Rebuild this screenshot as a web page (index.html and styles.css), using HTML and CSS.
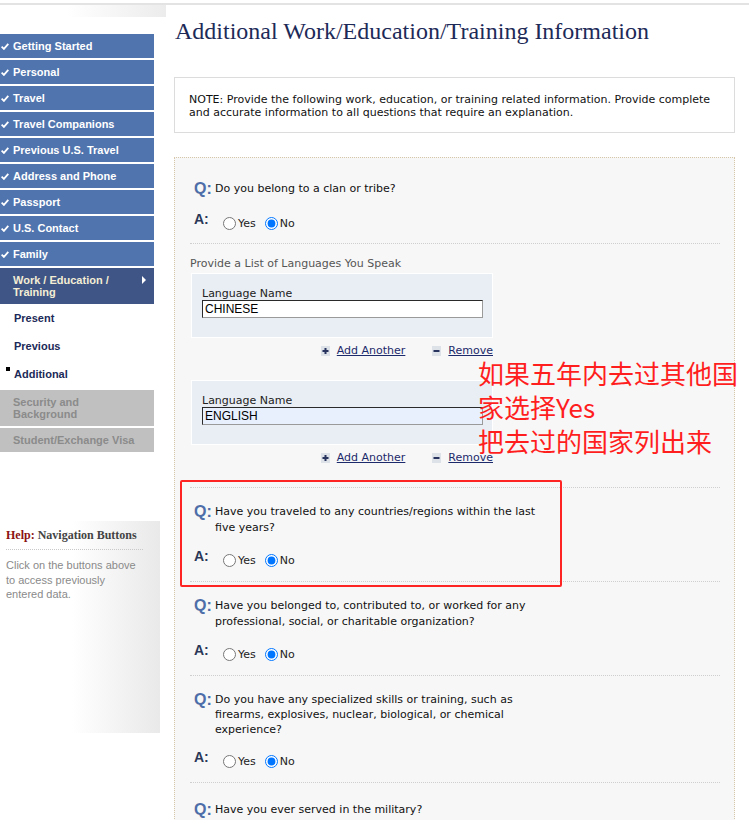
FILE: index.html
```html
<!DOCTYPE html>
<html>
<head>
<meta charset="utf-8">
<link rel="stylesheet" href="styles.css">
</head>
<body>
<div class="topline"></div>
<div class="layout">
  <aside class="sidebar">
    <div class="side-head"></div>
    <nav class="nav">
      <div class="nav-item done"><svg class="chk" viewBox="0 0 8 7"><path d="M0.6 3.6 L2.9 5.9 L7.3 0.9" fill="none" stroke="#fff" stroke-width="1.8"/></svg>Getting Started</div>
      <div class="nav-item done"><svg class="chk" viewBox="0 0 8 7"><path d="M0.6 3.6 L2.9 5.9 L7.3 0.9" fill="none" stroke="#fff" stroke-width="1.8"/></svg>Personal</div>
      <div class="nav-item done"><svg class="chk" viewBox="0 0 8 7"><path d="M0.6 3.6 L2.9 5.9 L7.3 0.9" fill="none" stroke="#fff" stroke-width="1.8"/></svg>Travel</div>
      <div class="nav-item done"><svg class="chk" viewBox="0 0 8 7"><path d="M0.6 3.6 L2.9 5.9 L7.3 0.9" fill="none" stroke="#fff" stroke-width="1.8"/></svg>Travel Companions</div>
      <div class="nav-item done"><svg class="chk" viewBox="0 0 8 7"><path d="M0.6 3.6 L2.9 5.9 L7.3 0.9" fill="none" stroke="#fff" stroke-width="1.8"/></svg>Previous U.S. Travel</div>
      <div class="nav-item done"><svg class="chk" viewBox="0 0 8 7"><path d="M0.6 3.6 L2.9 5.9 L7.3 0.9" fill="none" stroke="#fff" stroke-width="1.8"/></svg>Address and Phone</div>
      <div class="nav-item done"><svg class="chk" viewBox="0 0 8 7"><path d="M0.6 3.6 L2.9 5.9 L7.3 0.9" fill="none" stroke="#fff" stroke-width="1.8"/></svg>Passport</div>
      <div class="nav-item done"><svg class="chk" viewBox="0 0 8 7"><path d="M0.6 3.6 L2.9 5.9 L7.3 0.9" fill="none" stroke="#fff" stroke-width="1.8"/></svg>U.S. Contact</div>
      <div class="nav-item done"><svg class="chk" viewBox="0 0 8 7"><path d="M0.6 3.6 L2.9 5.9 L7.3 0.9" fill="none" stroke="#fff" stroke-width="1.8"/></svg>Family</div>
      <div class="nav-item current"><span>Work / Education /<br>Training</span><span class="tri"></span></div>
      <div class="sub">Present</div>
      <div class="sub">Previous</div>
      <div class="sub active"><span class="bullet"></span>Additional</div>
      <div class="nav-item disabled sec">Security and<br>Background</div>
      <div class="nav-item disabled">Student/Exchange Visa</div>
    </nav>
    <div class="help">
      <div class="help-title"><span class="help-key">Help:</span> Navigation Buttons</div>
      <div class="help-rule"></div>
      <div class="help-text">Click on the buttons above<br>to access previously<br>entered data.</div>
    </div>
  </aside>

  <main class="main">
    <h1 class="title">Additional Work/Education/Training Information</h1>
    <div class="note">NOTE: Provide the following work, education, or training related information. Provide complete<br>and accurate information to all questions that require an explanation.</div>

    <div class="panel">
      <div class="qa first">
        <div class="q"><span class="q-label">Q:</span><span class="q-text">Do you belong to a clan or tribe?</span></div>
        <div class="a"><span class="a-label">A:</span>
          <label class="opt"><input type="radio" name="r1">Yes</label>
          <label class="opt"><input type="radio" name="r1" checked>No</label>
        </div>
      </div>

      <div class="langs">
        <div class="langs-title">Provide a List of Languages You Speak</div>
        <div class="lang-box">
          <div class="lang-label">Language Name</div>
          <input class="lang-input" type="text" value="CHINESE">
        </div>
        <div class="add-row">
          <span class="act"><svg class="ico" viewBox="0 0 9 10"><rect x="0" y="0" width="9" height="10" fill="#dde1e8"/><path d="M4.5 2 V8 M1.5 5 H7.5" stroke="#28335e" stroke-width="2"/></svg><a class="link">Add Another</a></span>
          <span class="act"><svg class="ico" viewBox="0 0 9 10"><rect x="0" y="0" width="9" height="10" fill="#dde1e8"/><path d="M1.5 5 H7.5" stroke="#28335e" stroke-width="2"/></svg><a class="link">Remove</a></span>
        </div>
        <div class="lang-box second">
          <div class="lang-label">Language Name</div>
          <input class="lang-input filled" type="text" value="ENGLISH">
        </div>
        <div class="add-row">
          <span class="act"><svg class="ico" viewBox="0 0 9 10"><rect x="0" y="0" width="9" height="10" fill="#dde1e8"/><path d="M4.5 2 V8 M1.5 5 H7.5" stroke="#28335e" stroke-width="2"/></svg><a class="link">Add Another</a></span>
          <span class="act"><svg class="ico" viewBox="0 0 9 10"><rect x="0" y="0" width="9" height="10" fill="#dde1e8"/><path d="M1.5 5 H7.5" stroke="#28335e" stroke-width="2"/></svg><a class="link">Remove</a></span>
        </div>
      </div>

      <div class="qa">
        <div class="q"><span class="q-label">Q:</span><span class="q-text">Have you traveled to any countries/regions within the last<br>five years?</span></div>
        <div class="a"><span class="a-label">A:</span>
          <label class="opt"><input type="radio" name="r2">Yes</label>
          <label class="opt"><input type="radio" name="r2" checked>No</label>
        </div>
      </div>

      <div class="qa">
        <div class="q"><span class="q-label">Q:</span><span class="q-text">Have you belonged to, contributed to, or worked for any<br>professional, social, or charitable organization?</span></div>
        <div class="a"><span class="a-label">A:</span>
          <label class="opt"><input type="radio" name="r3">Yes</label>
          <label class="opt"><input type="radio" name="r3" checked>No</label>
        </div>
      </div>

      <div class="qa three">
        <div class="q"><span class="q-label">Q:</span><span class="q-text">Do you have any specialized skills or training, such as<br>firearms, explosives, nuclear, biological, or chemical<br>experience?</span></div>
        <div class="a"><span class="a-label">A:</span>
          <label class="opt"><input type="radio" name="r4">Yes</label>
          <label class="opt"><input type="radio" name="r4" checked>No</label>
        </div>
      </div>

      <div class="qa last">
        <div class="q"><span class="q-label">Q:</span><span class="q-text">Have you ever served in the military?</span></div>
      </div>
    </div>

    <div class="annot">如果五年内去过其他国<br>家选择Yes<br>把去过的国家列出来</div>
    <div class="annot-box"></div>
  </main>
</div>
</body>
</html>
```

FILE: styles.css
```css
html, body {
  margin: 0;
  padding: 0;
  background: #fff;
}
body {
  font-family: "DejaVu Sans", Verdana, sans-serif;
  overflow: hidden;
}
.topline {
  margin-top: 3px;
  height: 2px;
  background: #e3e3e3;
}
.layout {
  display: flex;
  align-items: flex-start;
}
.sidebar {
  width: 160px;
  flex: none;
}
.side-head {
  margin-left: 67px;
  width: 99px;
  height: 12px;
  background: linear-gradient(to right, #ffffff, #ececec);
}
.nav {
  margin-top: 17px;
  width: 154px;
  font: bold 11px/12px "Liberation Sans", Arial, sans-serif;
}
.nav-item {
  display: flex;
  align-items: center;
  height: 24px;
  margin-bottom: 2px;
  background: #5074ae;
  color: #fff;
  padding-left: 1px;
  box-sizing: border-box;
}
.chk {
  width: 8px;
  height: 7px;
  margin-right: 4px;
  flex: none;
}
.nav-item.current {
  height: 36px;
  margin-bottom: 0;
  background: #3f5585;
  color: #f4eed5;
  padding: 6px 8px 0 13px;
  align-items: flex-start;
  justify-content: space-between;
}
.tri {
  margin-top: 2px;
  width: 0;
  height: 0;
  border-left: 4px solid #fff;
  border-top: 4px solid transparent;
  border-bottom: 4px solid transparent;
}
.sub {
  height: 28px;
  display: flex;
  align-items: center;
  padding-left: 14px;
  color: #1b2a58;
}
.sub.active {
  padding-left: 6px;
}
.bullet {
  width: 4px;
  height: 4px;
  background: #000;
  margin-right: 4px;
  align-self: flex-start;
  margin-top: 7px;
}
.nav-item.disabled {
  background: #c0c0c0;
  color: #8b8b8b;
  padding-left: 13px;
}
.nav-item.sec {
  height: 36px;
  margin-top: 2px;
}
.help {
  margin-top: 69px;
  width: 160px;
  height: 212px;
  background: linear-gradient(to right, #ffffff 45%, #e9e9e9 100%);
}
.help-title {
  padding: 7px 6px 0;
  font: bold 12px/14px "Liberation Serif", "Times New Roman", serif;
  color: #444;
}
.help-key {
  color: #8b1212;
}
.help-rule {
  margin: 7px 17px 0 6px;
  border-top: 1px dotted #c8c8c8;
}
.help-text {
  margin-top: 8px;
  padding-left: 6px;
  font: 11px/14.5px "Liberation Sans", Arial, sans-serif;
  color: #8a8a8a;
}

.main {
  position: relative;
  margin-left: 14px;
  width: 561px;
  flex: none;
}
.title {
  margin: 13px 0 0 1px;
  font: normal 24px/26px "Liberation Serif", "Times New Roman", serif;
  color: #1d2a58;
  white-space: nowrap;
}
.note {
  margin-top: 33px;
  border: 1px solid #dcdcdc;
  padding: 15px 14px 13px;
  font-size: 11px;
  line-height: 13px;
  color: #111;
  white-space: nowrap;
}
.panel {
  margin-top: 24px;
  border: 1px dotted #d6c7a9;
  background: #f7f7f7;
  padding: 6px 14px 0 15px;
  height: 700px;
}
.qa {
  padding: 16px 0 14px;
  border-bottom: 1px dotted #cfcfcf;
}
.qa.first {
  padding-top: 17px;
}
.qa.last {
  padding-top: 19px;
  border-bottom: none;
}
.q {
  display: flex;
  padding-left: 4px;
  line-height: 16px;
}
.q-label {
  width: 21px;
  flex: none;
  font: bold 16px/16px "Liberation Sans", Arial, sans-serif;
  color: #4d6ea8;
}
.q-text {
  font-size: 11px;
  color: #111;
  white-space: nowrap;
}
.qa.three .q {
  line-height: 15px;
}
.a {
  display: flex;
  align-items: flex-start;
  padding-left: 4px;
  margin-top: 18px;
}
.qa.first .a {
  margin-top: 20px;
}
.qa.first {
  padding-bottom: 13px;
}
.a-label {
  width: 29px;
  flex: none;
  margin-top: -4px;
  font: bold 14px/13px "Liberation Sans", Arial, sans-serif;
  color: #2b3758;
}
.opt {
  display: inline-flex;
  align-items: center;
  height: 13px;
  margin-right: 9px;
  font-size: 11px;
  color: #222;
}
.opt input {
  width: 13px;
  height: 13px;
  margin: 0 2px 0 0;
}
.langs {
  padding: 13px 0 22px;
  border-bottom: 1px dotted #cfcfcf;
}
.langs-title {
  font-size: 11px;
  line-height: 13px;
  color: #555;
}
.lang-box {
  margin: 3px 0 0 1px;
  width: 302px;
  box-sizing: border-box;
  border: 1px solid #fff;
  background: #e9eef5;
  padding: 13px 9px 19px 10px;
}
.lang-box.second {
  margin-top: 22px;
}
.lang-label {
  font-size: 11px;
  line-height: 13px;
  color: #222;
}
.lang-input {
  display: block;
  width: 281px;
  height: 18px;
  box-sizing: border-box;
  margin: 0;
  padding: 0 2px;
  border-style: solid;
  border-width: 1px;
  border-color: #2a2a2a #9a9a9a #9a9a9a #2a2a2a;
  background: #fff;
  font: 12px "Liberation Sans", Arial, sans-serif;
  color: #000;
  outline: none;
}
.lang-input.filled {
  background: #e8f0fe;
}
.add-row {
  margin: 6px 0 0 1px;
  width: 302px;
  display: flex;
  justify-content: flex-end;
  gap: 27px;
  line-height: 14px;
}
.act {
  display: inline-flex;
  align-items: center;
  gap: 7px;
}
.ico {
  width: 9px;
  height: 10px;
  flex: none;
}
.link {
  font-size: 11px;
  color: #1c2a6b;
  text-decoration: underline;
}
.annot {
  position: absolute;
  left: 304px;
  top: 351px;
  font: 26px/34px "Noto Sans CJK SC", sans-serif;
  color: #ff1e1e;
  white-space: nowrap;
}
.annot-box {
  position: absolute;
  left: 6px;
  top: 475px;
  width: 382px;
  height: 107px;
  box-sizing: border-box;
  border: 2px solid #ff2424;
  border-radius: 2px;
}
```
